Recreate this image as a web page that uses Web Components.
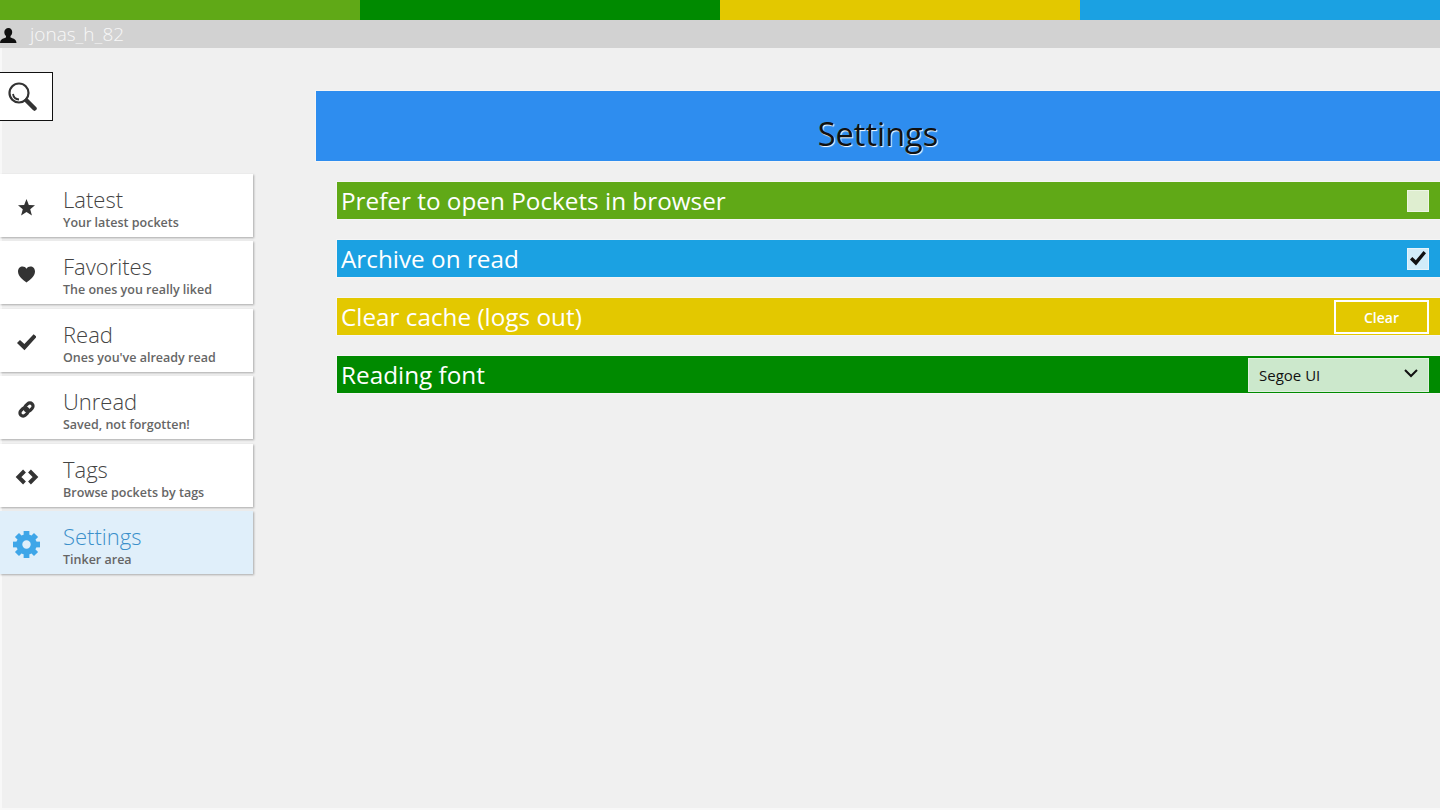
<!DOCTYPE html>
<html>
<head>
<meta charset="utf-8">
<title>Settings</title>
<style>
   html, body { margin: 0; height: 100%; }
   body { background: #f0f0f0; font-family: "Open Sans", "Noto Sans", sans-serif; overflow: hidden; }
</style>
</head>
<body>
<p-app></p-app>
<script>
const gearTeeth = [0, 45, 90, 135, 180, 225, 270, 315]
   .map(a => `<rect x="6.300" y="0" width="3.400" height="4" transform="rotate(${a} 8 8)"/>`).join('');

const icons = {
   star: '<path d="M8 0l2.200 5.600 5.800.3-4.500 3.700 1.600 5.900L8 12.200l-5.100 3.300 1.600-5.900L0 5.900l5.800-.3z"/>',
   heart: '<path d="M8 15.500C5 13.200 0 10 0 5.200 0 2.300 2 .5 4.300 .5 5.900 .5 7.200 1.300 8 2.700 8.800 1.300 10.100 .5 11.700 .5 14 .5 16 2.300 16 5.200 16 10 11 13.200 8 15.500z"/>',
   check: '<path d="M0 8.500l2.500-2.600 3.700 3.400L14 1l2.500 2.300L6.300 14.500z"/>',
   link: '<g fill="none" stroke="currentColor" stroke-width="3" transform="rotate(-45 8 8)"><rect x=".5" y="5" width="8.500" height="6" rx="3"/><rect x="7" y="5" width="8.500" height="6" rx="3"/></g>',
   code: '<path fill="none" stroke="currentColor" stroke-width="4" d="M9 2L3 8l6 6M14 2l6 6-6 6"/>',
   gear: gearTeeth + '<circle cx="8" cy="8" r="4.300" fill="none" stroke="currentColor" stroke-width="3.600"/>'
};

const navTileTemplate = document.createElement('template');
navTileTemplate.innerHTML = `
   <style>
      :host {
         display: flex;
         height: 63px;
         width: 253px;
         margin-bottom: 4.400px;
         background: #fff;
         box-shadow: 1px 1px 2px #aaa;
         color: #444;
      }
      :host([active]) { background: #e0effa; }
      :host([active]) .title { color: #3b8fca; }
      :host([active]) .icon { color: #3fa6e8; }
      .icon {
         width: 53px;
         display: flex;
         align-items: center;
         justify-content: center;
         color: #333;
         padding-top: 4px;
         box-sizing: border-box;
      }
      svg { display: block; fill: currentColor; }
      .text { padding-left: 10px; }
      .title { font-size: 22px; font-weight: 300; line-height: 30px; margin-top: 10px; }
      .sub { font-size: 12.500px; font-weight: 600; color: #666; line-height: 14px; margin-top: 2px; }
   </style>
   <div class="icon"><svg></svg></div>
   <div class="text">
      <div class="title"><slot></slot></div>
      <div class="sub"><slot name="sub"></slot></div>
   </div>
`;

class NavTile extends HTMLElement {
   constructor() {
      super();
      this.attachShadow({ mode: 'open' });
      this.shadowRoot.appendChild(navTileTemplate.content.cloneNode(true));
      const name = this.getAttribute('icon');
      const svg = this.shadowRoot.querySelector('svg');
      const size = this.getAttribute('size') || 17;
      svg.setAttribute('viewBox', name === 'code' ? '0 0 23 16' : '0 0 16 16');
      svg.setAttribute('width', name === 'code' ? 24 : size);
      svg.setAttribute('height', name === 'code' ? 16 : size);
      svg.innerHTML = icons[name];
   }
}
customElements.define('p-nav-tile', NavTile);

const rowTemplate = document.createElement('template');
rowTemplate.innerHTML = `
   <style>
      :host {
         display: flex;
         align-items: center;
         justify-content: space-between;
         height: 37px;
         margin-bottom: 21px;
         padding-left: 4px;
         color: #fff;
         font-size: 24.300px;
         background: var(--row-color);
         box-shadow: 0 0 0 1px rgba(255,255,255,.35);
      }
      .label { white-space: nowrap; line-height: 37px; }
      .ctl { display: flex; align-items: center; padding-right: 11px; }
   </style>
   <div class="label"><slot></slot></div>
   <div class="ctl"><slot name="control"></slot></div>
`;

class SettingRow extends HTMLElement {
   constructor() {
      super();
      this.attachShadow({ mode: 'open' });
      this.shadowRoot.appendChild(rowTemplate.content.cloneNode(true));
   }
}
customElements.define('p-setting-row', SettingRow);

const checkTemplate = document.createElement('template');
checkTemplate.innerHTML = `
   <style>
      :host {
         display: flex;
         align-items: center;
         justify-content: center;
         width: 22px;
         height: 22px;
         box-sizing: border-box;
         background: rgba(255,255,255,.8);
         border: 1px solid rgba(255,255,255,.45);
      }
      svg { display: none; fill: #111; }
      :host([checked]) svg { display: block; }
   </style>
   <svg width="16" height="15" viewBox="0 0 16 15"><path d="M0 8.500l2.300-2.500 3.500 3.300L13.500 0 16 2.200 6 14.500z"/></svg>
`;

class CheckBox extends HTMLElement {
   constructor() {
      super();
      this.attachShadow({ mode: 'open' });
      this.shadowRoot.appendChild(checkTemplate.content.cloneNode(true));
   }
}
customElements.define('p-check', CheckBox);

const clearTemplate = document.createElement('template');
clearTemplate.innerHTML = `
   <style>
      :host {
         display: flex;
         align-items: center;
         justify-content: center;
         width: 95px;
         height: 34px;
         box-sizing: border-box;
         padding-top: 1px;
         border: 2px solid #fff;
         color: #fff;
         font-size: 14px;
         font-weight: 600;
      }
   </style>
   <slot></slot>
`;

class ClearButton extends HTMLElement {
   constructor() {
      super();
      this.attachShadow({ mode: 'open' });
      this.shadowRoot.appendChild(clearTemplate.content.cloneNode(true));
   }
}
customElements.define('p-button', ClearButton);

const selectTemplate = document.createElement('template');
selectTemplate.innerHTML = `
   <style>
      :host {
         display: flex;
         align-items: center;
         justify-content: space-between;
         width: 181px;
         height: 34px;
         box-sizing: border-box;
         padding: 1px 10px 0;
         background: #cce8cc;
         border: 1px solid #e0f0e0;
         color: #111;
         font-size: 15px;
      }
      svg { display: block; fill: none; stroke: #111; stroke-width: 2; margin-bottom: 3px; }
   </style>
   <span><slot></slot></span>
   <svg width="14" height="9" viewBox="0 0 14 9"><path d="M1 1l6 6 6-6"/></svg>
`;

class FontSelect extends HTMLElement {
   constructor() {
      super();
      this.attachShadow({ mode: 'open' });
      this.shadowRoot.appendChild(selectTemplate.content.cloneNode(true));
   }
}
customElements.define('p-select', FontSelect);

const appTemplate = document.createElement('template');
appTemplate.innerHTML = `
   <style>
      :host { display: block; height: 810px; overflow: hidden; }
      .stripes { display: flex; height: 20px; }
      .stripes div { flex: 1; }
      .user {
         display: flex;
         align-items: center;
         height: 28px;
         background: #d2d2d2;
         color: #f8f8f8;
         font-size: 19px;
         font-weight: 300;
      }
      .user svg { margin: 3px 13px 0 0; fill: #111; display: block; }
      .body { display: flex; height: 762px; box-shadow: inset 2px 0 0 #f8f8f8, inset 0 -2px 0 #f8f8f8; }
      aside { width: 316px; flex: none; padding-top: 24px; }
      .search {
         width: 53px;
         height: 49px;
         box-sizing: border-box;
         background: #fff;
         border: 1px solid #111;
         border-left: 0;
         padding-left: 8px;
         display: flex;
         align-items: center;
         margin-bottom: 53px;
      }
      main { flex: 1; padding-top: 43px; min-width: 0; }
      h1 {
         margin: 0 0 21px;
         height: 70px;
         box-sizing: border-box;
         padding-top: 21px;
         background: #2e8def;
         color: #111;
         font-size: 32.500px;
         font-weight: 400;
         line-height: 44px;
         text-align: center;
         text-shadow: 1px 1px 1px #fff;
         box-shadow: 0 0 0 1px rgba(255,255,255,.35);
      }
      .rows { padding-left: 21px; }
   </style>
   <div class="stripes">
      <div style="background:#60a917"></div>
      <div style="background:#008a00"></div>
      <div style="background:#e3c800"></div>
      <div style="background:#1ba1e2"></div>
   </div>
   <div class="user">
      <svg width="17" height="15" viewBox="0 0 17 15"><path d="M8.500 0c2.300 0 3.700 1.700 3.700 4 0 1.800-.8 3.200-1.700 4.100v1.400c2 .8 6 1.500 6 5.500H0c0-4 4-4.700 6-5.500V8.100C5.100 7.200 4.300 5.800 4.300 4c0-2.300 1.900-4 4.200-4z"/></svg>
      <span>jonas_h_82</span>
   </div>
   <div class="body">
      <aside>
         <div class="search">
            <svg width="29" height="29" viewBox="0 0 29 29" fill="none" stroke="#333">
               <circle cx="11" cy="11" r="9.500" stroke-width="2.200"/>
               <path d="M5 12a6.500 6.500 0 0 0 6 5.500" stroke-width="1.800"/>
               <path d="M18.500 18.500l8 8" stroke-width="4.500" stroke-linecap="round"/>
            </svg>
         </div>
         <nav>
            <p-nav-tile icon="star"><span>Latest</span><span slot="sub">Your latest pockets</span></p-nav-tile>
            <p-nav-tile icon="heart"><span>Favorites</span><span slot="sub">The ones you really liked</span></p-nav-tile>
            <p-nav-tile icon="check" size="19"><span>Read</span><span slot="sub">Ones you've already read</span></p-nav-tile>
            <p-nav-tile icon="link"><span>Unread</span><span slot="sub">Saved, not forgotten!</span></p-nav-tile>
            <p-nav-tile icon="code"><span>Tags</span><span slot="sub">Browse pockets by tags</span></p-nav-tile>
            <p-nav-tile icon="gear" size="27" active><span>Settings</span><span slot="sub">Tinker area</span></p-nav-tile>
         </nav>
      </aside>
      <main>
         <h1>Settings</h1>
         <div class="rows">
            <p-setting-row style="--row-color:#60a917">Prefer to open Pockets in browser<p-check slot="control"></p-check></p-setting-row>
            <p-setting-row style="--row-color:#1ba1e2">Archive on read<p-check slot="control" checked></p-check></p-setting-row>
            <p-setting-row style="--row-color:#e3c800">Clear cache (logs out)<p-button slot="control">Clear</p-button></p-setting-row>
            <p-setting-row style="--row-color:#008a00">Reading font<p-select slot="control">Segoe UI</p-select></p-setting-row>
         </div>
      </main>
   </div>
`;

class PocketApp extends HTMLElement {
   constructor() {
      super();
      this.attachShadow({ mode: 'open' });
      this.shadowRoot.appendChild(appTemplate.content.cloneNode(true));
   }
}
customElements.define('p-app', PocketApp);
</script>
</body>
</html>
